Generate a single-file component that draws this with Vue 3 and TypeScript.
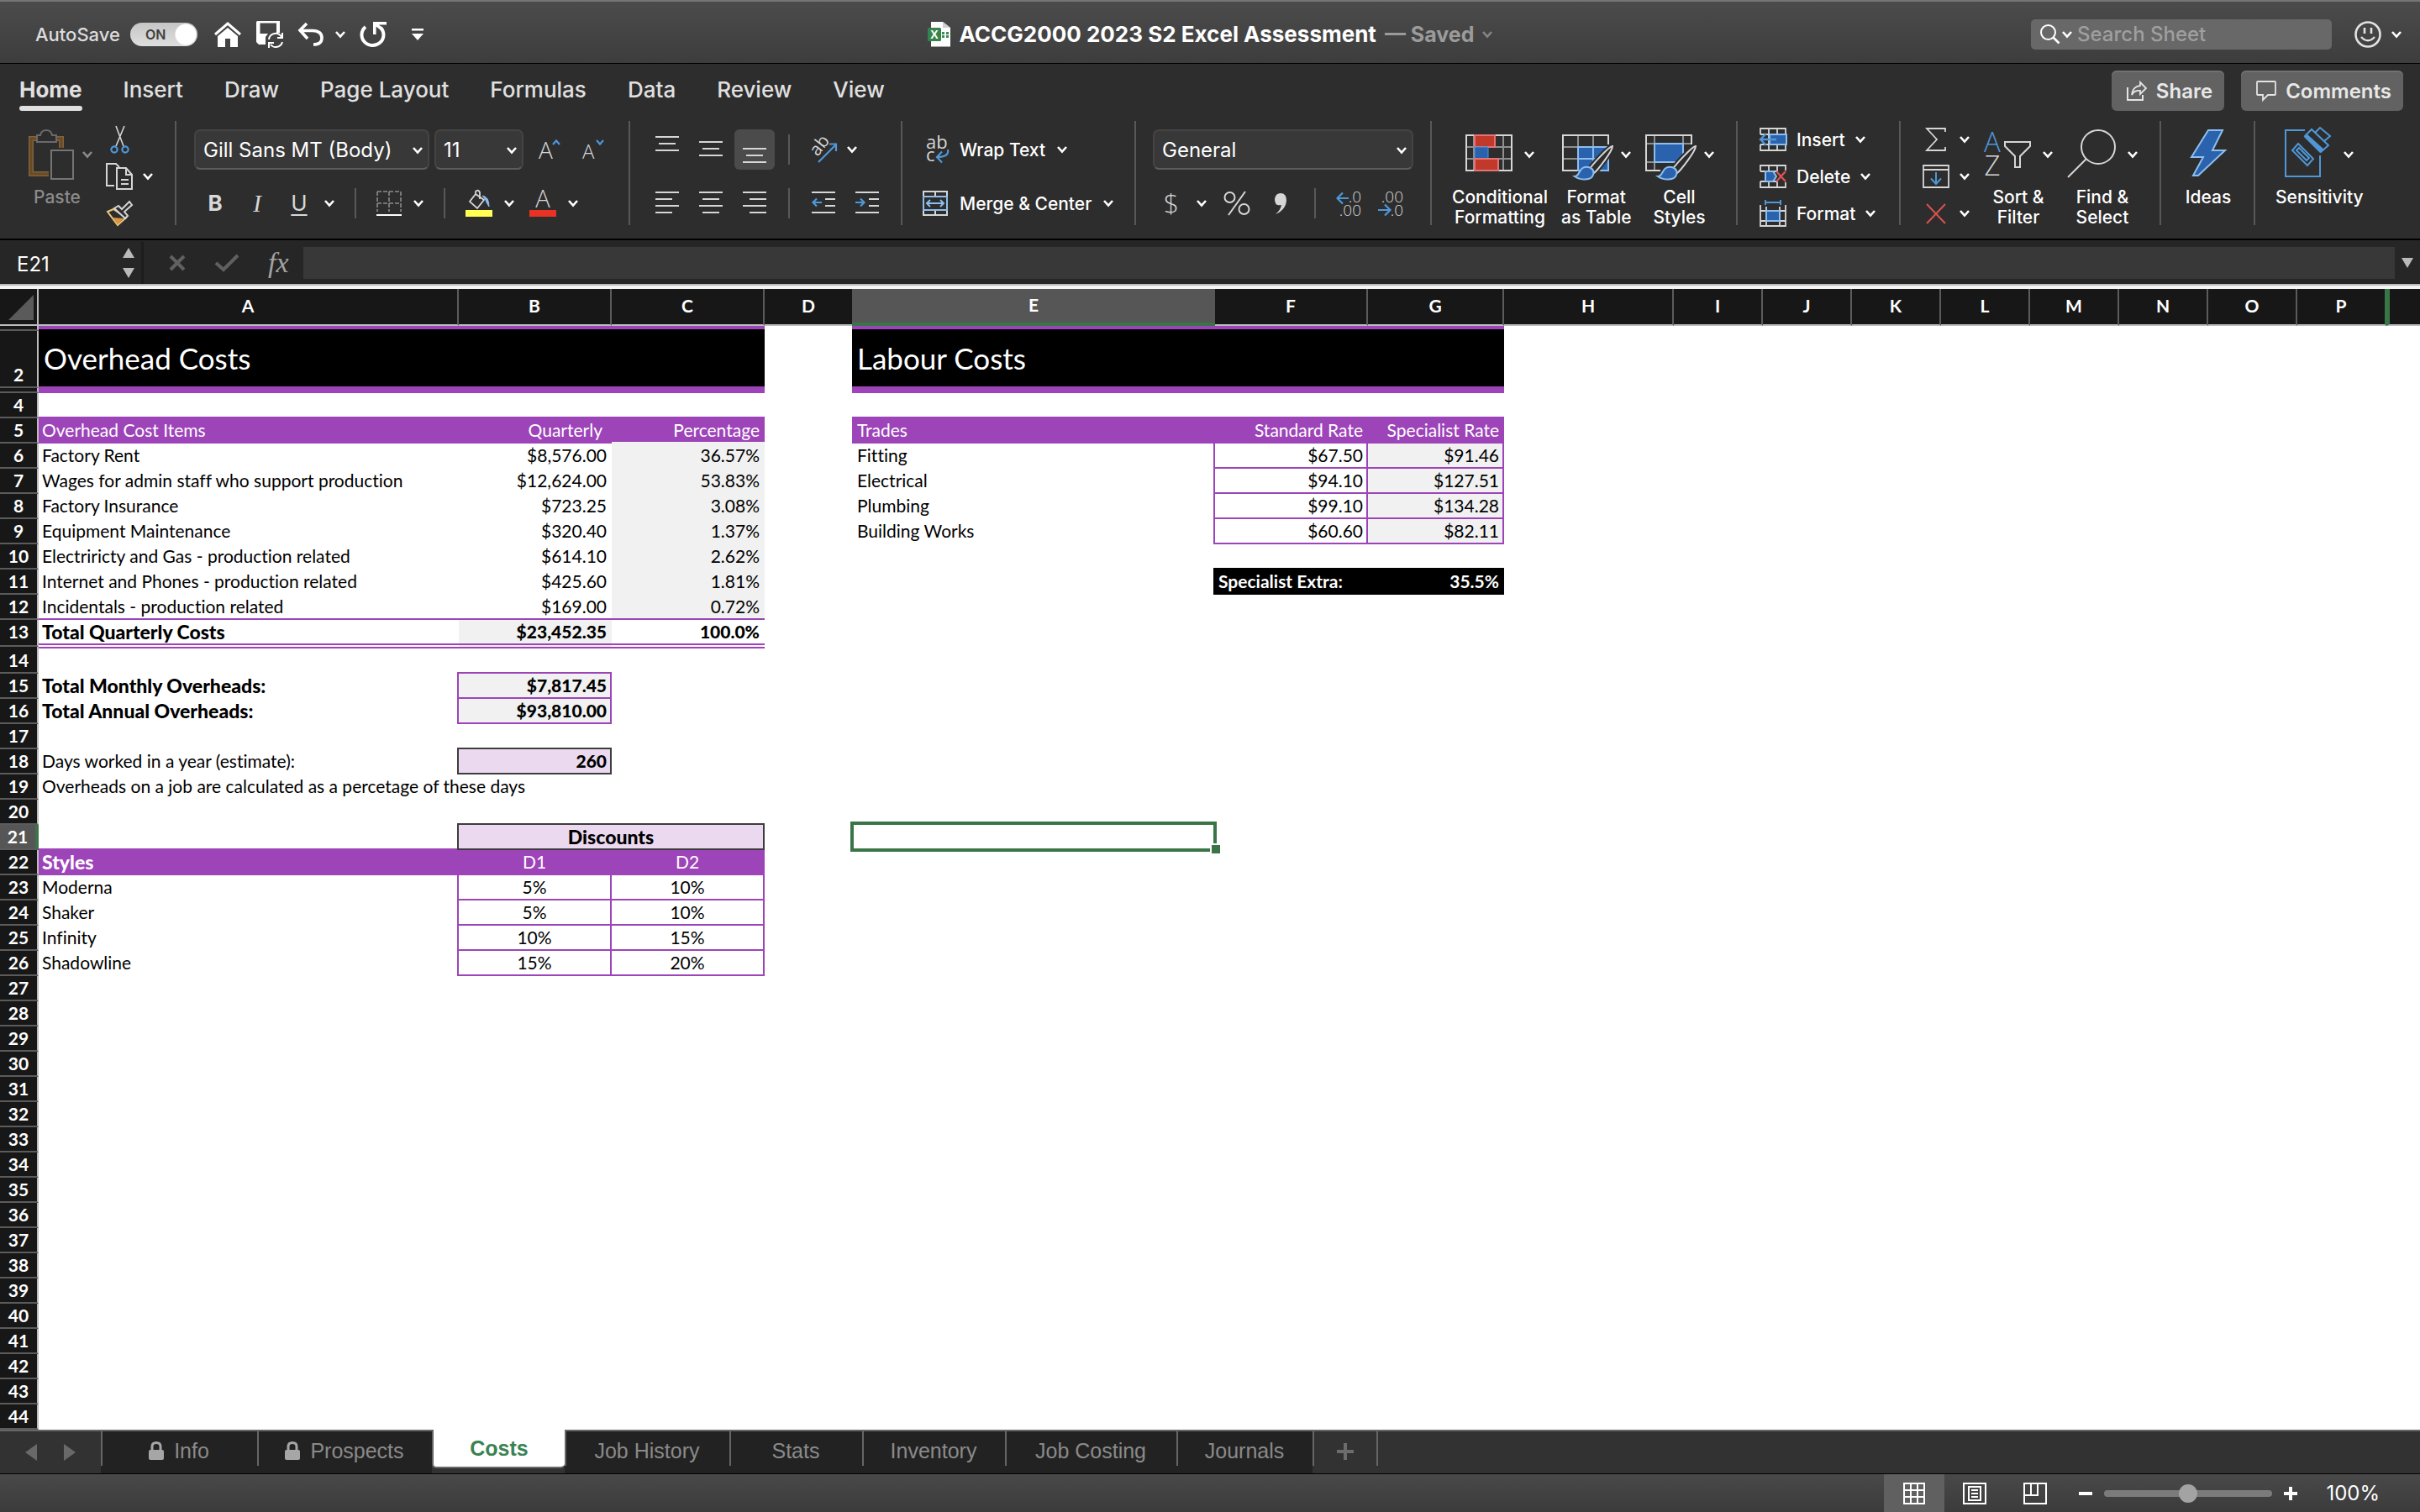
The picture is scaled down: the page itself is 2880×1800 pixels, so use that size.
<script setup lang="ts">
import { h, ref } from 'vue'

interface Cell {
  text?: string
  cls?: string
  span?: number
}
interface Row {
  n: number
  cls?: string
  cells: Record<string, Cell>
}

const columns: string[] = ['A', 'B', 'C', 'D', 'E', 'F', 'G', 'H', 'I', 'J', 'K', 'L', 'M', 'N', 'O', 'P', '']
const ribbonTabs: string[] = ['Home', 'Insert', 'Draw', 'Page Layout', 'Formulas', 'Data', 'Review', 'View']
const autoSave = ref(true)
const zoomLevel = ref(50)

const content: Record<number, Record<string, Cell>> = {
  1: {}, 2: {}, 3: {},
  5: {
    A: { text: 'Overhead Cost Items', cls: 'head' },
    B: { text: 'Quarterly', cls: 'head num inset' },
    C: { text: 'Percentage', cls: 'head num edge-grey' },
    E: { text: 'Trades', cls: 'head indent' },
    F: { text: 'Standard Rate', cls: 'head num' },
    G: { text: 'Specialist Rate', cls: 'head num' },
  },
  15: { A: { text: 'Total Monthly Overheads:', cls: 'bold strong' }, B: { text: '$7,817.45', cls: 'num bold grey box' } },
  16: { A: { text: 'Total Annual Overheads:', cls: 'bold strong' }, B: { text: '$93,810.00', cls: 'num bold grey box' } },
  18: { A: { text: 'Days worked in a year (estimate):' }, B: { text: '260', cls: 'num bold lilac box dark' } },
  19: { A: { text: 'Overheads on a job are calculated as a percetage of these days' } },
  21: { A: { cls: 'edge-purple' }, B: { text: 'Discounts', cls: 'mid bold strong lilac box dark', span: 2 }, E: { cls: 'selected' } },
  22: { A: { text: 'Styles', cls: 'head bold strong' }, B: { text: 'D1', cls: 'head mid' }, C: { text: 'D2', cls: 'head mid' } },
}

for (const c of ['A', 'B', 'C', 'E', 'F', 'G']) {
  content[1][c] = { cls: 'cap' }
  content[2][c] = { cls: 'banner' }
  content[3][c] = { cls: 'head' }
  content[4] = { ...content[4], [c]: { cls: 'edge-purple' } }
}
content[2].A.text = 'Overhead Costs'
content[2].E.text = 'Labour Costs'

const overheads: string[][] = [
  ['Factory Rent', '$8,576.00', '36.57%'],
  ['Wages for admin staff who support production', '$12,624.00', '53.83%'],
  ['Factory Insurance', '$723.25', '3.08%'],
  ['Equipment Maintenance', '$320.40', '1.37%'],
  ['Electriricty and Gas - production related', '$614.10', '2.62%'],
  ['Internet and Phones - production related', '$425.60', '1.81%'],
  ['Incidentals - production related', '$169.00', '0.72%'],
]
overheads.forEach(([name, amount, share], i) => {
  const edge = i === overheads.length - 1 ? ' edge-purple' : ''
  content[6 + i] = {
    A: { text: name, cls: edge },
    B: { text: amount, cls: 'num' + edge },
    C: { text: share, cls: 'num grey' + edge },
  }
})
content[13] = {
  A: { text: 'Total Quarterly Costs', cls: 'bold strong rule-low' },
  B: { text: '$23,452.35', cls: 'num bold grey rule-low' },
  C: { text: '100.0%', cls: 'num bold rule-low' },
}
content[14] = { A: { cls: 'rule-top' }, B: { cls: 'rule-top' }, C: { cls: 'rule-top' } }

const trades: string[][] = [
  ['Fitting', '$67.50', '$91.46'],
  ['Electrical', '$94.10', '$127.51'],
  ['Plumbing', '$99.10', '$134.28'],
  ['Building Works', '$60.60', '$82.11'],
]
trades.forEach(([name, standard, specialist], i) => {
  Object.assign(content[6 + i], {
    E: { text: name, cls: 'indent' },
    F: { text: standard, cls: 'num box' },
    G: { text: specialist, cls: 'num grey box' },
  })
})
Object.assign(content[11], {
  F: { text: 'Specialist Extra:', cls: 'ink' },
  G: { text: '35.5%', cls: 'ink num' },
})

const discounts: string[][] = [
  ['Moderna', '5%', '10%'],
  ['Shaker', '5%', '10%'],
  ['Infinity', '10%', '15%'],
  ['Shadowline', '15%', '20%'],
]
discounts.forEach(([style, d1, d2], i) => {
  content[23 + i] = {
    A: { text: style },
    B: { text: d1, cls: 'mid box' },
    C: { text: d2, cls: 'mid box' },
  }
})

const rowClass: Record<number, string> = { 1: 'thin', 2: 'title', 3: 'thin', 13: 'tall total', 14: 'tall', 21: 'active' }
const rows: Row[] = Array.from({ length: 44 }, (_, i) => ({
  n: i + 1,
  cls: rowClass[i + 1],
  cells: content[i + 1] ?? {},
}))
function columnsOf(row: Row): string[] {
  return row.cells.B?.span ? columns.filter((c) => c !== 'C') : columns
}

const sheets: { name: string; locked?: boolean; active?: boolean; w: number }[] = [
  { name: 'Info', locked: true, w: 186 },
  { name: 'Prospects', locked: true, w: 208 },
  { name: 'Costs', active: true, w: 158 },
  { name: 'Job History', w: 196 },
  { name: 'Stats', w: 158 },
  { name: 'Inventory', w: 170 },
  { name: 'Job Costing', w: 204 },
  { name: 'Journals', w: 162 },
]

const W = '#d6d6d6'
const B = '#4f97d8'
const L = '#8dbfee'
const F = '#2a62ae'
const lines = (rows: number[][]) =>
  rows.map(([x, y, w]) => `<rect x="${x}" y="${y}" width="${w}" height="2" fill="${W}"/>`).join('')
const brush = `<path d="M60 20 C56 20 36 42 33 47 L38 52 C42 49 60 26 60 20Z" fill="#2d2d2d" stroke="#2d2d2d" stroke-width="6"/>
<path d="M60 20 C56 20 36 42 33 47 L38 52 C42 49 60 26 60 20Z" fill="#2d2d2d" stroke="${W}" stroke-width="2"/>
<path d="M15 56 C21 56 20 46 27 45 C34 44 39 48 37 54 C35 61 22 61 15 56Z" fill="${F}" stroke="${L}" stroke-width="2"/>`
const thin = 'font-family="Open Sans, sans-serif" font-weight="300"'

const icons: Record<string, { w: number; h: number; body: string }> = {
  chev: { w: 12, h: 8, body: `<path d="M1 1 L6 6.600 L11 1" fill="none" stroke="currentColor" stroke-width="2.600"/>` },
  home: { w: 32, h: 30, body: `<path d="M1 15 L16 2 L31 15" fill="none" stroke="#fff" stroke-width="3"/><path d="M4 17 L16 7 L28 17 V30 H19 V20 H13 V30 H4Z" fill="#fff"/>` },
  save: { w: 32, h: 32, body: `<path d="M0 1.500 Q0 0 1.500 0 H28 V14 H24 V2.500 H4.500 V15 H14 L11 19 V28 H3 L0 25Z" fill="#fff"/><path d="M15 22 A8 8 0 0 1 30 19 M31 14 V20 H25 M31 25 A8 8 0 0 1 17 28 M15 32 V26 H21" fill="none" stroke="#fff" stroke-width="2"/>` },
  undo: { w: 30, h: 28, body: `<path d="M10 1 L2 9 L11 19 M2 9.500 H17 Q28 10 28 18 Q28 26 18 26" fill="none" stroke="#fff" stroke-width="3.600"/>` },
  redo: { w: 32, h: 30, body: `<path d="M6 6 A13 12.500 0 1 0 24 7" fill="none" stroke="#fff" stroke-width="4"/><path d="M15 1.800 H31 M16.800 0 V15 M17 2 L26 9" fill="none" stroke="#fff" stroke-width="3.600"/>` },
  more: { w: 16, h: 14, body: `<path d="M1 0 H15 V2.500 H1Z M1 6 H15 L8 14Z" fill="#fff"/>` },
  doc: { w: 28, h: 30, body: `<path d="M4 0 H18 L27 7 V29.500 H4Z" fill="#fdfdfd"/><path d="M18 0 V7 H27Z" fill="#cfcfcf"/><path d="M17 12 H20 V15 H17Z M22 12 H25 V15 H22Z M17 16 H20 V19 H17Z M22 16 H25 V19 H22Z" fill="#3b8a52"/><rect y="7" width="16" height="16" rx="1.500" fill="#36834b"/><text x="8" y="20" font-size="14" font-weight="700" fill="#fff" text-anchor="middle" font-family="Liberation Sans, sans-serif">X</text>` },
  search: { w: 24, h: 24, body: `<circle cx="9.500" cy="9.500" r="8.500" fill="none" stroke="#fff" stroke-width="2"/><path d="M15.500 15.500 L22.500 22.500" stroke="#fff" stroke-width="2.600"/>` },
  smile: { w: 32, h: 32, body: `<circle cx="16" cy="16" r="14.500" fill="none" stroke="#e2e2e2" stroke-width="2.600"/><path d="M12 8 V15 M20 8 V15" stroke="#e2e2e2" stroke-width="2.600"/><path d="M8 19 Q16 27.500 24 19" fill="none" stroke="#e2e2e2" stroke-width="2.400"/>` },
  share: { w: 24, h: 24, body: `<path d="M1 8 V23 H19 V17" fill="none" stroke="#e4e4e4" stroke-width="2"/><path d="M16 2 L23 9 L16 16 V12 Q9 11 6 17 Q7 7 16 6Z" fill="none" stroke="#e4e4e4" stroke-width="1.800"/>` },
  comment: { w: 24, h: 24, body: `<path d="M1 2 Q1 1 2 1 H22 Q23 1 23 2 V16 Q23 17 22 17 H14 L8 23 V17 H2 Q1 17 1 16Z" fill="none" stroke="#e4e4e4" stroke-width="1.800"/>` },
  paste: { w: 54, h: 60, body: `<path d="M10 11 H3 V53 H24 M34 11 H39 V22" fill="none" stroke="#7d6341" stroke-width="6"/><path d="M10 11 H3 V53 H24 M34 11 H39 V22" fill="none" stroke="#6b4a22" stroke-width="3"/><path d="M10 15 V7 H14 Q15 1 21 1 Q27 1 28 7 H33 V15Z" fill="#2d2d2d" stroke="#6a6a6a" stroke-width="2"/><rect x="27" y="25" width="26" height="34" fill="#2d2d2d" stroke="#757575" stroke-width="2"/>` },
  cut: { w: 32, h: 32, body: `<path d="M12 0 L21 24 M22 0 L12 24" stroke="${W}" stroke-width="1.600"/><circle cx="10" cy="28" r="3.600" fill="none" stroke="${B}" stroke-width="2.200"/><circle cx="23" cy="28" r="3.600" fill="none" stroke="${B}" stroke-width="2.200"/>` },
  copy: { w: 32, h: 32, body: `<path d="M10 27 H1 V1 H12 L16 5" fill="none" stroke="${W}" stroke-width="2"/><path d="M13 6 H24 L31 14 V31 H13Z M24 6 V14 H31 M18 20 H27 M18 25 H27" fill="none" stroke="${W}" stroke-width="2"/>` },
  painter: { w: 32, h: 30, body: `<path d="M2 13 L9 10 L24 20 L14 29Z" fill="none" stroke="#e8c877" stroke-width="2"/><path d="M8 20 L21 21 L14 28Z" fill="#dd9340"/><path d="M10 9 L15 6 L19 10 L28 1 L31 5 L22 13 L26 18 L23 21Z" fill="#2d2d2d" stroke="${W}" stroke-width="2"/>` },
  grow: { w: 26, h: 24, body: `<text x="0" y="23" font-size="28" fill="${W}" ${thin}>A</text><path d="M17 6 L21 1.500 L25 6" fill="none" stroke="${B}" stroke-width="2.200"/>` },
  shrink: { w: 26, h: 24, body: `<text x="0" y="23" font-size="24" fill="${W}" ${thin}>A</text><path d="M17 1 L21 5.500 L25 1" fill="none" stroke="${B}" stroke-width="2.200"/>` },
  borders: { w: 30, h: 30, body: `<path d="M1 1 H29 V25 M1 1 V25 M1 15 H29 M15 1 V25" fill="none" stroke="#8c8c8c" stroke-width="1.600" stroke-dasharray="5 2"/><path d="M0 29 H30" stroke="#fff" stroke-width="2"/>` },
  fill: { w: 32, h: 32, body: `<path d="M12 5 L5 14 L14 22 L22 12 Z M12 5 V2 Q15 -1 17 3 V11" fill="none" stroke="${W}" stroke-width="1.800"/><path d="M20 7 Q28 8 28 20 Q24 14 24 12Z" fill="${L}" stroke="${L}"/><rect y="24" width="32" height="8" fill="#ffff54"/>` },
  color: { w: 32, h: 32, body: `<text x="16" y="21" font-size="29" fill="${W}" text-anchor="middle" ${thin}>A</text><rect y="24" width="32" height="8" fill="#e93223"/>` },
  vtop: { w: 28, h: 32, body: lines([[0, 0, 28], [4, 8, 20], [0, 16, 28]]) },
  vmid: { w: 28, h: 32, body: lines([[0, 6, 28], [4, 14, 20], [0, 22, 28]]) },
  vbot: { w: 28, h: 32, body: lines([[0, 14, 28], [4, 22, 20], [0, 30, 28]]) },
  left: { w: 28, h: 28, body: lines([[0, 0, 28], [0, 8, 20], [0, 16, 28], [0, 24, 20]]) },
  center: { w: 28, h: 28, body: lines([[0, 0, 28], [4, 8, 20], [0, 16, 28], [4, 24, 20]]) },
  right: { w: 28, h: 28, body: lines([[0, 0, 28], [8, 8, 20], [0, 16, 28], [8, 24, 20]]) },
  outdent: { w: 28, h: 28, body: lines([[0, 0, 28], [16, 8, 12], [16, 16, 12], [0, 24, 28]]) + `<path d="M12 13 H1.500 M6 8.500 L1.500 13 L6 17.500" fill="none" stroke="${B}" stroke-width="2.200"/>` },
  indent: { w: 28, h: 28, body: lines([[0, 0, 28], [16, 8, 12], [16, 16, 12], [0, 24, 28]]) + `<path d="M0 13 H11 M6 8.500 L10.500 13 L6 17.500" fill="none" stroke="${B}" stroke-width="2.200"/>` },
  orient: { w: 32, h: 32, body: `<text font-size="21" fill="${W}" transform="translate(9 25) rotate(-52)" font-family="Open Sans, sans-serif">ab</text><path d="M10 31 L31 10 M23 9.500 H31 V18" fill="none" stroke="${B}" stroke-width="2.200"/>` },
  wrap: { w: 30, h: 32, body: `<text font-size="22" fill="${W}" font-family="Open Sans, sans-serif"><tspan x="4" y="15">ab</tspan><tspan x="4" y="30">c</tspan></text><path d="M30 16 Q32 25 17 25 M23 18.500 L17 25 L23 31.500" fill="none" stroke="${B}" stroke-width="2.200"/>` },
  merge: { w: 30, h: 30, body: `<path d="M1 7 V1 H29 V7 M1 23 V29 H29 V23 M15 1 V7 M15 23 V29" fill="none" stroke="${W}" stroke-width="2"/><rect x="1" y="7" width="28" height="16" fill="none" stroke="${L}" stroke-width="2"/><path d="M5 15 H25 M9 11 L5 15 L9 19 M21 11 L25 15 L21 19" fill="none" stroke="${L}" stroke-width="2"/>` },
  dollar: { w: 32, h: 32, body: `<text x="16" y="27" font-size="32" fill="${W}" text-anchor="middle" ${thin}>$</text>` },
  percent: { w: 32, h: 32, body: `<circle cx="7.500" cy="9" r="6" fill="none" stroke="${W}" stroke-width="2"/><circle cx="24.500" cy="23" r="6" fill="none" stroke="${W}" stroke-width="2"/><path d="M26 2 L6 30" stroke="${W}" stroke-width="2"/>` },
  comma: { w: 32, h: 32, body: `<path d="M16 4 Q23 4 23 13 Q22 24 10 29 Q16 24 17 18 Q9 20 9 11 Q10 4 16 4Z" fill="${W}"/>` },
  moredec: { w: 30, h: 30, body: `<text font-size="19" fill="${W}" text-anchor="end" ${thin}><tspan x="30" y="14">.0</tspan><tspan x="30" y="30">.00</tspan></text><path d="M15 9 H2 M8 2.500 L1.500 9 L8 15.500" fill="none" stroke="${B}" stroke-width="2.200"/>` },
  lessdec: { w: 30, h: 30, body: `<text font-size="19" fill="${W}" text-anchor="end" ${thin}><tspan x="30" y="14">.00</tspan><tspan x="30" y="30">.0</tspan></text><path d="M0 23 H14 M8 16.500 L14.500 23 L8 29.500" fill="none" stroke="${B}" stroke-width="2.200"/>` },
  condfmt: { w: 56, h: 60, body: `<path d="M1 21 H55 M1 35 H55 M10 7 V49 M45 7 V49" stroke="#8f8f8f" stroke-width="2"/><rect x="1" y="7" width="54" height="42" fill="none" stroke="${W}" stroke-width="2"/><rect x="11" y="7" width="24" height="14" fill="#c0392b" stroke="#e57373" stroke-width="2"/><rect x="11" y="21" width="16" height="14" fill="${F}" stroke="${B}"/><rect x="11" y="35" width="28" height="14" fill="#c0392b" stroke="#e57373" stroke-width="2"/>` },
  fmttable: { w: 56, h: 60, body: `<path d="M1 21 H55 M1 35 H55 M19 7 V49 M37 7 V49" stroke="#8f8f8f" stroke-width="2"/><path d="M55 18 V7 H1 V49 H20" fill="none" stroke="${W}" stroke-width="2"/><rect x="19" y="21" width="36" height="28" fill="${F}" stroke="${L}" stroke-width="2"/><path d="M19 35 H55 M37 21 V49" stroke="${L}" stroke-width="2"/>${brush}` },
  cellstyle: { w: 56, h: 60, body: `<path d="M1 17 H55 M1 39 H20 M11 7 V49 M45 7 V17" stroke="#8f8f8f" stroke-width="2"/><path d="M55 18 V7 H1 V49 H18" fill="none" stroke="${W}" stroke-width="2"/><rect x="11" y="17" width="34" height="22" fill="${F}" stroke="${L}" stroke-width="2"/>${brush}` },
  insert: { w: 32, h: 28, body: `<path d="M1 8 V1 H31 V27 H1 V20 M11 1 V27 M21 1 V27 M1 8 H31 M1 20 H31" fill="none" stroke="${W}" stroke-width="1.800"/><rect x="12" y="8" width="20" height="12" fill="${F}" stroke="${L}" stroke-width="2"/><path d="M20 14 H1 M8 7 L1 14 L8 21" fill="none" stroke="${B}" stroke-width="2.400"/>` },
  delete: { w: 32, h: 28, body: `<path d="M1 8 V1 H31 V7 M1 20 V27 H31 V21 M11 1 V8 M21 1 V8 M11 20 V27 M21 20 V27 M1 8 H20 M1 20 H20" fill="none" stroke="${W}" stroke-width="1.800"/><path d="M7 8 H16 L20 14 L16 20 H7Z" fill="${F}" stroke="${L}" stroke-width="2"/><path d="M20 8 L31 20 M31 8 L20 20" stroke="#d9534f" stroke-width="2.400"/>` },
  format: { w: 32, h: 32, body: `<path d="M1 6 V31 H31 V6 M1 13 H31 M1 25 H31 M8 8 V31 M24 8 V31" fill="none" stroke="${W}" stroke-width="1.800"/><rect x="8" y="13" width="16" height="12" fill="${F}" stroke="${L}" stroke-width="2"/><path d="M7 3 H25 M7 0 V6 M25 0 V6" stroke="${B}" stroke-width="2"/>` },
  sum: { w: 32, h: 28, body: `<path d="M27 5 V1 H5 L17 14 L5 27 H27 V23" fill="none" stroke="${W}" stroke-width="1.800"/>` },
  filldown: { w: 32, h: 28, body: `<path d="M1 1 H31 V27 H1Z M1 6 H31" fill="none" stroke="${W}" stroke-width="1.800"/><path d="M16 9 V22 M10 16.500 L16 23 L22 16.500" fill="none" stroke="${B}" stroke-width="2"/>` },
  clear: { w: 32, h: 28, body: `<path d="M5 3 L27 26 M27 3 L5 26" stroke="#d9534f" stroke-width="2"/>` },
  sort: { w: 56, h: 60, body: `<text font-size="33" text-anchor="middle" ${thin}><tspan x="10" y="27" fill="${B}">A</tspan><tspan x="10" y="55" fill="${W}">Z</tspan></text><path d="M25 15 H55 V20 L43 32 V45 H37 V32 L25 20Z" fill="none" stroke="${W}" stroke-width="2"/>` },
  find: { w: 58, h: 60, body: `<circle cx="37" cy="21" r="20" fill="none" stroke="${W}" stroke-width="2"/><path d="M23 35 L1 57" stroke="${W}" stroke-width="2"/>` },
  ideas: { w: 44, h: 60, body: `<path d="M22 1 H39 L27 25 H42 L10 55 H4 L16 33 H2Z" fill="${F}" stroke="${L}" stroke-width="2"/>` },
  sens: { w: 56, h: 60, body: `<path d="M24 1 H1 V56 H42 V31" fill="none" stroke="${B}" stroke-width="2"/><path d="M9 25 L16 17 L34 35 L27 43Z M14 25 L17 22 L29 34 L26 37Z" fill="none" stroke="${B}" stroke-width="2"/><path d="M24 8 L32 0 L52 19 L43 27Z" fill="none" stroke="${B}" stroke-width="2"/><path d="M23 9 L27 6 L47 24 L42 28Z" fill="${B}"/><path d="M36 4 L42 -2 L54 8 L47 14" fill="none" stroke="${B}" stroke-width="2"/>` },
  cancel: { w: 20, h: 20, body: `<path d="M2 2 L18 18 M18 2 L2 18" stroke="#606060" stroke-width="4"/>` },
  accept: { w: 30, h: 22, body: `<path d="M2 11 L11 19 L28 2" fill="none" stroke="#606060" stroke-width="4"/>` },
  lock: { w: 18, h: 22, body: `<path d="M4 11 V6 Q4 1.500 9 1.500 Q14 1.500 14 6 V11" fill="none" stroke="#a6a6a6" stroke-width="3"/><rect y="10" width="18" height="12" rx="2" fill="#a6a6a6"/>` },
  normal: { w: 26, h: 26, body: `<path d="M1 1 H25 V25 H1Z M9 1 V25 M17 1 V25 M1 9 H25 M1 17 H25" fill="none" stroke="#fff" stroke-width="2"/>` },
  layout: { w: 28, h: 26, body: `<path d="M1 1 H27 V25 H1Z M7 5 H21 V21 H7Z M10 9 H18 M10 13 H18 M10 17 H18" fill="none" stroke="#fff" stroke-width="2"/>` },
  breaks: { w: 28, h: 26, body: `<path d="M1 1 H27 V25 H1Z M9 1 V15 M1 15 H17 V1" fill="none" stroke="#fff" stroke-width="2"/>` },
  minus: { w: 16, h: 16, body: `<path d="M0 8 H16" stroke="#fff" stroke-width="4"/>` },
  plus: { w: 16, h: 16, body: `<path d="M0 8 H16 M8 0 V16" stroke="#fff" stroke-width="4"/>` },
}

const Icon = (props: { name: string }) => {
  const i = icons[props.name]
  return h('svg', { class: 'ico', width: i.w, height: i.h, viewBox: `0 0 ${i.w} ${i.h}`, 'aria-hidden': 'true', innerHTML: i.body })
}
Icon.props = ['name']
</script>

<template>
  <div class="app">
    <header class="titlebar">
      <div class="quick">
        <label class="autosave">
          AutoSave
          <span class="switch"><input v-model="autoSave" type="checkbox" /><span class="state">ON</span></span>
        </label>
        <div class="quick-icons">
          <button aria-label="Home"><Icon name="home" /></button>
          <button aria-label="Save"><Icon name="save" /></button>
          <button class="split" aria-label="Undo"><Icon name="undo" /><Icon name="chev" /></button>
          <button aria-label="Redo"><Icon name="redo" /></button>
          <button class="more" aria-label="Customize toolbar"><Icon name="more" /></button>
        </div>
      </div>
      <div class="doc">
        <Icon name="doc" />
        <h1>ACCG2000 2023 S2 Excel Assessment</h1>
        <span class="saved">— Saved</span>
        <span class="saved-chev"><Icon name="chev" /></span>
      </div>
      <div class="title-right">
        <label class="search">
          <Icon name="search" /><Icon name="chev" />
          <input type="text" placeholder="Search Sheet" aria-label="Search Sheet" />
        </label>
        <button class="split feedback" aria-label="Feedback"><Icon name="smile" /><Icon name="chev" /></button>
      </div>
    </header>

    <nav class="menubar">
      <a v-for="(t, i) in ribbonTabs" :key="t" href="#" :class="{ current: i === 0 }">{{ t }}</a>
      <div class="actions">
        <button><Icon name="share" />Share</button>
        <button><Icon name="comment" />Comments</button>
      </div>
    </nav>

    <section class="ribbon">
      <div class="group clipboard">
        <button class="big paste">
          <span class="pic"><Icon name="paste" /><Icon name="chev" /></span>
          <span class="label">Paste</span>
        </button>
        <div class="stack">
          <button aria-label="Cut"><Icon name="cut" /></button>
          <button aria-label="Copy"><Icon name="copy" /><Icon name="chev" /></button>
          <button aria-label="Format Painter"><Icon name="painter" /></button>
        </div>
      </div>

      <div class="group font">
        <div class="line tight">
          <span class="picker face">
            <select aria-label="Font"><option>Gill Sans MT (Body)</option></select><Icon name="chev" />
          </span>
          <span class="picker size">
            <select aria-label="Font size"><option>11</option></select><Icon name="chev" />
          </span>
          <span class="sizers">
            <button aria-label="Increase font size"><Icon name="grow" /></button>
            <button aria-label="Decrease font size"><Icon name="shrink" /></button>
          </span>
        </div>
        <div class="line marks">
          <button class="glyph b">B</button>
          <button class="glyph i">I</button>
          <button class="split"><span class="glyph u">U</span><Icon name="chev" /></button>
          <span class="bar"></span>
          <button class="split" aria-label="Borders"><Icon name="borders" /><Icon name="chev" /></button>
          <span class="bar"></span>
          <button class="split" aria-label="Fill color"><Icon name="fill" /><Icon name="chev" /></button>
          <button class="split" aria-label="Font color"><Icon name="color" /><Icon name="chev" /></button>
        </div>
      </div>

      <div class="group align">
        <div class="line">
          <button aria-label="Top align"><Icon name="vtop" /></button>
          <button aria-label="Middle align"><Icon name="vmid" /></button>
          <button class="pressed" aria-label="Bottom align"><Icon name="vbot" /></button>
          <span class="bar"></span>
          <button aria-label="Orientation"><Icon name="orient" /></button>
          <Icon name="chev" />
        </div>
        <div class="line">
          <button aria-label="Align left"><Icon name="left" /></button>
          <button aria-label="Center"><Icon name="center" /></button>
          <button aria-label="Align right"><Icon name="right" /></button>
          <span class="bar"></span>
          <button aria-label="Decrease indent"><Icon name="outdent" /></button>
          <button aria-label="Increase indent"><Icon name="indent" /></button>
        </div>
      </div>

      <div class="group merge">
        <button class="line texted"><Icon name="wrap" />Wrap Text<Icon name="chev" /></button>
        <button class="line texted"><Icon name="merge" />Merge &amp; Center<Icon name="chev" /></button>
      </div>

      <div class="group number">
        <div class="line">
          <span class="picker kind">
            <select aria-label="Number format"><option>General</option></select><Icon name="chev" />
          </span>
        </div>
        <div class="line figures">
          <button class="split" aria-label="Currency"><Icon name="dollar" /><Icon name="chev" /></button>
          <button aria-label="Percent"><Icon name="percent" /></button>
          <button aria-label="Comma"><Icon name="comma" /></button>
          <span class="bar"></span>
          <button aria-label="Increase decimal"><Icon name="moredec" /></button>
          <button aria-label="Decrease decimal"><Icon name="lessdec" /></button>
        </div>
      </div>

      <div class="group styles">
        <button class="big wide">
          <span class="pic"><Icon name="condfmt" /><Icon name="chev" /></span>
          <span class="label">Conditional<br />Formatting</span>
        </button>
        <button class="big">
          <span class="pic"><Icon name="fmttable" /><Icon name="chev" /></span>
          <span class="label">Format<br />as Table</span>
        </button>
        <button class="big">
          <span class="pic"><Icon name="cellstyle" /><Icon name="chev" /></span>
          <span class="label">Cell<br />Styles</span>
        </button>
      </div>

      <div class="group cells">
        <div class="stack">
          <button><Icon name="insert" />Insert<Icon name="chev" /></button>
          <button><Icon name="delete" />Delete<Icon name="chev" /></button>
          <button><Icon name="format" />Format<Icon name="chev" /></button>
        </div>
      </div>

      <div class="group editing">
        <div class="stack">
          <button aria-label="AutoSum"><Icon name="sum" /><Icon name="chev" /></button>
          <button aria-label="Fill"><Icon name="filldown" /><Icon name="chev" /></button>
          <button aria-label="Clear"><Icon name="clear" /><Icon name="chev" /></button>
        </div>
        <button class="big">
          <span class="pic"><Icon name="sort" /><Icon name="chev" /></span>
          <span class="label">Sort &amp;<br />Filter</span>
        </button>
        <button class="big">
          <span class="pic"><Icon name="find" /><Icon name="chev" /></span>
          <span class="label">Find &amp;<br />Select</span>
        </button>
      </div>

      <div class="group ideas">
        <button class="big">
          <span class="pic"><Icon name="ideas" /></span>
          <span class="label">Ideas</span>
        </button>
      </div>

      <div class="group sensitivity">
        <button class="big">
          <span class="pic"><Icon name="sens" /><Icon name="chev" /></span>
          <span class="label">Sensitivity</span>
        </button>
      </div>
    </section>

    <section class="formula">
      <div class="namebox">
        <input type="text" value="E21" aria-label="Name box" />
        <span class="spin"><i class="up"></i><i class="down"></i></span>
      </div>
      <div class="fx-tools">
        <button aria-label="Cancel"><Icon name="cancel" /></button>
        <button aria-label="Enter"><Icon name="accept" /></button>
        <button class="fx">fx</button>
      </div>
      <input class="entry" type="text" aria-label="Formula bar" />
      <button class="expand" aria-label="Expand formula bar"><i class="down"></i></button>
    </section>

    <main class="sheet">
      <table>
        <colgroup>
          <col class="c-head" />
          <col v-for="c in columns" :key="c" :class="'c-' + (c || 'rest')" />
        </colgroup>
        <thead>
          <tr>
            <th class="corner"><i></i></th>
            <th v-for="c in columns" :key="c" scope="col" :class="'h-' + (c || 'rest')">{{ c }}</th>
          </tr>
        </thead>
        <tbody>
          <tr v-for="r in rows" :key="r.n" :class="r.cls">
            <th scope="row">{{ r.cls === 'thin' ? '' : r.n }}</th>
            <td v-for="c in columnsOf(r)" :key="c" :class="r.cells[c]?.cls" :colspan="r.cells[c]?.span">{{ r.cells[c]?.text }}</td>
          </tr>
        </tbody>
      </table>
    </main>

    <nav class="tabs">
      <div class="arrows">
        <button aria-label="Previous sheet"><i class="prev"></i></button>
        <button aria-label="Next sheet"><i class="next"></i></button>
      </div>
      <button v-for="s in sheets" :key="s.name" class="tab" :class="{ front: s.active }" :style="{ width: s.w + 'px' }">
        <Icon v-if="s.locked" name="lock" />{{ s.name }}
      </button>
      <button class="add" aria-label="New sheet"><i></i></button>
    </nav>

    <footer class="status">
      <button class="view on" aria-label="Normal view"><Icon name="normal" /></button>
      <button class="view" aria-label="Page layout view"><Icon name="layout" /></button>
      <button class="view" aria-label="Page break preview"><Icon name="breaks" /></button>
      <div class="zoom">
        <button aria-label="Zoom out"><Icon name="minus" /></button>
        <input v-model="zoomLevel" type="range" min="0" max="100" aria-label="Zoom" />
        <button aria-label="Zoom in"><Icon name="plus" /></button>
      </div>
      <output class="percent">100%</output>
    </footer>
  </div>
</template>

<style>
body {
  margin: 0;
  background: #2d2d2d;
}
</style>

<style scoped>
.app {
  --purple: #9d44b9;
  --green: #3a7548;
  --ui: Inter, "Liberation Sans", sans-serif;
  --cell: Lato, "Noto Sans", sans-serif;
  display: flex;
  flex-direction: column;
  min-height: 100vh;
  overflow: hidden;
  font-family: var(--ui);
  color: #fff;
}
button,
input,
select {
  margin: 0;
  padding: 0;
  border: 0;
  background: none;
  color: inherit;
  font: inherit;
  outline: none;
}
button {
  display: flex;
  align-items: center;
  justify-content: center;
  white-space: nowrap;
}
.ico {
  display: block;
  flex: none;
  overflow: visible;
}
.split {
  gap: 14px;
}

/* title bar */
.titlebar {
  box-sizing: border-box;
  display: grid;
  grid-template-columns: 1fr auto 1fr;
  align-items: center;
  height: 76px;
  padding: 4px 22px 0 42px;
  background: linear-gradient(#4b4b4b, #3d3d3d);
  border-top: 2px solid #757575;
  border-bottom: 1px solid #000;
}
.quick,
.autosave,
.quick-icons,
.doc,
.title-right {
  display: flex;
  align-items: center;
}
.quick {
  gap: 20px;
}
.autosave {
  gap: 12px;
  font-size: 22px;
  font-weight: 500;
  color: #dcdcdc;
}
.switch {
  display: grid;
  align-items: center;
}
.switch > * {
  grid-area: 1 / 1;
}
.switch input {
  appearance: none;
  width: 80px;
  height: 28px;
  border-radius: 14px;
  background: radial-gradient(circle at 66px 14px, #fff 12px, transparent 13px), linear-gradient(#c6c6c6, #dedede);
}
.state {
  padding-left: 18px;
  font-size: 16px;
  font-weight: 600;
  color: #404040;
}
.quick-icons {
  gap: 18px;
}
.more {
  padding-left: 10px;
}
.doc {
  gap: 10px;
  padding-right: 20px;
}
.doc h1 {
  margin: 0;
  font-size: 26px;
  line-height: 32px;
  font-weight: 700;
}
.saved {
  font-size: 25px;
  line-height: 32px;
  font-weight: 700;
  color: #9b9b9b;
}
.saved-chev {
  color: #858585;
}
.title-right {
  justify-content: flex-end;
  gap: 27px;
}
.search {
  box-sizing: border-box;
  display: flex;
  align-items: center;
  gap: 2px;
  width: 358px;
  height: 36px;
  padding-left: 11px;
  border-radius: 5px;
  background: #686868;
}
.search input {
  flex: 1;
  min-width: 0;
  margin-left: 4px;
  font-size: 24px;
  font-weight: 500;
}
.search input::placeholder {
  color: #9f9f9f;
  opacity: 1;
}
.feedback {
  gap: 12px;
}

/* menu tabs */
.menubar {
  box-sizing: border-box;
  display: flex;
  align-items: center;
  gap: 49px;
  height: 68px;
  padding: 0 20px 4px 23px;
  background: #2d2d2d;
}
.menubar a {
  position: relative;
  padding: 7px 0 9px;
  color: #e0e0e0;
  font-size: 26px;
  font-weight: 500;
  line-height: 32px;
  text-decoration: none;
}
.menubar a.current {
  font-weight: 700;
}
.menubar a.current::after {
  content: "";
  position: absolute;
  left: 0;
  right: 0;
  bottom: 0;
  height: 6px;
  border-radius: 3px;
  background: #e0e0e0;
}
.actions {
  display: flex;
  gap: 20px;
  margin-left: auto;
}
.actions button {
  gap: 11px;
  height: 48px;
  padding: 0 14px 0 18px;
  border-radius: 6px;
  background: #626262;
  box-shadow: inset 0 2px #717171;
  color: #e8e8e8;
  font-size: 24px;
  font-weight: 600;
}

/* ribbon */
.ribbon {
  display: flex;
  height: 140px;
  background: #2d2d2d;
  border-bottom: 2px solid #000;
  font-size: 21px;
  font-weight: 500;
}
.group {
  box-sizing: border-box;
  flex: none;
  padding-top: 10px;
  background: linear-gradient(#585858, #585858) no-repeat right top / 2px 124px;
}
.line {
  display: flex;
  align-items: center;
  height: 48px;
  margin-bottom: 16px;
}
.bar {
  width: 2px;
  height: 36px;
  background: #585858;
}
.stack {
  display: flex;
  flex-direction: column;
  margin-top: -10px;
}
.stack button {
  height: 44px;
  gap: 12px;
  justify-content: flex-start;
}
.big {
  flex-direction: column;
  justify-content: flex-start;
  gap: 9px;
  min-width: 82px;
}
.pic {
  display: flex;
  align-items: center;
  gap: 14px;
  height: 60px;
}
.label {
  line-height: 24px;
  text-align: center;
}
.clipboard {
  display: flex;
  gap: 16px;
  width: 210px;
  padding-left: 34px;
}
.paste {
  min-width: 76px;
  color: #8b8b8b;
}
.paste .pic {
  gap: 10px;
}
.paste .label {
  padding-right: 8px;
}
.font {
  width: 540px;
  padding-left: 21px;
}
.tight {
  gap: 6px;
}
.picker {
  position: relative;
  display: block;
}
.picker select {
  box-sizing: border-box;
  appearance: none;
  display: block;
  width: 100%;
  height: 48px;
  padding-left: 9px;
  border: 2px solid #444;
  border-bottom-color: #5c5c5c;
  border-radius: 7px;
  background: #383838;
  font-size: 24px;
  font-weight: 400;
}
.picker .ico {
  position: absolute;
  right: 8px;
  top: 21px;
}
.face {
  width: 280px;
}
.size {
  width: 106px;
}
.kind {
  width: 310px;
}
.sizers {
  display: flex;
  gap: 26px;
  padding-left: 12px;
}
.marks {
  gap: 18px;
  padding-left: 9px;
}
.marks .bar {
  margin: 0 6px;
}
.glyph {
  width: 32px;
  font-size: 26px;
  line-height: 32px;
  color: #d8d8d8;
  text-align: center;
}
.b {
  font-weight: 700;
}
.i {
  font-family: "Liberation Serif", serif;
  font-style: italic;
  font-size: 29px;
}
.u {
  font-weight: 400;
  text-decoration: underline;
  text-underline-offset: 4px;
  text-decoration-thickness: 2px;
}
.align {
  width: 324px;
  padding-left: 20px;
}
.align .line {
  gap: 4px;
}
.align .bar {
  margin: 0 12px;
}
.align button {
  width: 48px;
  height: 48px;
  border-radius: 6px;
}
.pressed {
  background: #4b4b4b;
}
.merge {
  width: 278px;
  padding-left: 24px;
}
.texted {
  gap: 14px;
}
.number {
  width: 352px;
  padding-left: 20px;
}
.figures {
  gap: 20px;
  padding-left: 6px;
}
.figures .bar {
  margin: 0 4px;
}
.styles {
  display: flex;
  gap: 16px;
  width: 364px;
  padding-left: 24px;
}
.wide {
  min-width: 112px;
}
.cells {
  width: 194px;
  padding-left: 26px;
}
.editing {
  display: flex;
  gap: 17px;
  width: 310px;
  padding-left: 26px;
}
.ideas {
  display: flex;
  justify-content: center;
  width: 112px;
}
.sensitivity {
  padding-left: 24px;
  background: none;
}

/* formula bar */
.formula {
  box-sizing: border-box;
  display: flex;
  align-items: center;
  height: 54px;
  padding-top: 2px;
  background: #262626;
  border-bottom: 2px solid #b9b9b9;
  box-shadow: 0 4px #f4f4f4;
  margin-bottom: 4px;
}
.namebox {
  box-sizing: border-box;
  display: flex;
  align-items: center;
  justify-content: space-between;
  width: 171px;
  height: 50px;
  padding: 0 8px 0 20px;
  border-right: 3px solid #1d1d1d;
}
.namebox input {
  width: 100px;
  padding-top: 2px;
  font-size: 24px;
}
.spin {
  display: flex;
  flex-direction: column;
  gap: 12px;
}
.up,
.down {
  display: block;
  width: 14px;
  height: 12px;
  background: #bababa;
}
.up {
  clip-path: polygon(50% 0, 100% 100%, 0 100%);
}
.down {
  clip-path: polygon(0 0, 100% 0, 50% 100%);
}
.fx-tools {
  display: flex;
  align-items: center;
  gap: 34px;
  width: 190px;
  box-sizing: border-box;
  padding-left: 30px;
}
.fx {
  color: #a2a2a2;
  font-family: "Liberation Serif", serif;
  font-style: italic;
  font-size: 34px;
  line-height: 36px;
}
.entry {
  flex: 1;
  height: 38px;
  background: #383838;
}
.expand {
  width: 30px;
}

/* worksheet */
.sheet {
  flex: 1;
  background: #fff;
  color: #000;
}
table {
  width: 100%;
  table-layout: fixed;
  border-collapse: separate;
  border-spacing: 0;
  font-family: var(--cell);
  font-size: 21px;
  line-height: 24px;
  font-variant-ligatures: none;
}
.c-head { width: 46px; }
.c-A { width: 500px; }
.c-B, .c-C, .c-F { width: 182px; }
.c-D { width: 104px; }
.c-E { width: 432px; }
.c-G { width: 162px; }
.c-H { width: 202px; }
.c-I, .c-J, .c-K, .c-L, .c-M, .c-N, .c-O, .c-P { width: 106px; }
.c-rest { width: auto; }
th,
td {
  box-sizing: border-box;
  height: 30px;
  border: 0 solid transparent;
  border-bottom-width: 2px;
  text-align: left;
  vertical-align: bottom;
  white-space: nowrap;
}
td {
  padding: 0 6px 2px 4px;
}
th {
  padding: 0 0 2px;
  border-right-width: 2px;
  background: #171717;
  color: #fff;
  font-weight: 700;
  text-align: center;
}
thead th {
  height: 44px;
  vertical-align: middle;
  border-color: #5b5b5b;
  border-bottom-color: #bdbdbd;
}
thead th.corner {
  border-right-color: #bdbdbd;
}
.corner i {
  display: block;
  width: 30px;
  height: 30px;
  margin: 4px 4px 0 auto;
  background: #5a5a5a;
  clip-path: polygon(100% 0, 100% 100%, 0 100%);
}
thead th.h-D {
  border-right-width: 0;
}
thead th.h-E {
  background: #565656;
  border-right-width: 0;
  border-bottom: 4px solid var(--green);
}
thead th.h-P {
  border-right-color: var(--green);
}
thead th.h-rest {
  border-left: 4px solid var(--green);
  border-right-width: 0;
}
tbody th {
  border-color: #5b5b5b;
  border-right-color: #bdbdbd;
}
.active th {
  background: #565656;
  border-right: 4px solid var(--green);
}
.thin th,
.thin td {
  height: 6px;
  padding: 0;
  font-size: 0;
  line-height: 0;
}
.title th,
.title td {
  height: 68px;
}
.tall th,
.tall td {
  height: 32px;
}
.total th,
.total td {
  padding-bottom: 4px;
}
.cap {
  background: #000;
  border-top: 4px solid var(--purple);
  border-bottom-width: 0;
}
.banner {
  background: #000;
  border-bottom-color: var(--purple);
  color: #fff;
  font-size: 35px;
  line-height: 40px;
  vertical-align: middle;
  padding-left: 6px;
}
.head {
  background: var(--purple);
  color: #fff;
}
.num {
  text-align: right;
}
.mid {
  text-align: center;
}
.inset {
  padding-right: 11px;
}
.indent {
  padding-left: 6px;
}
.bold {
  font-weight: 900;
}
.strong {
  font-size: 23px;
}
.grey {
  background: #f1f1f1;
}
.lilac {
  background: #ead9ef;
}
.ink {
  background: #000;
  color: #fff;
  font-weight: 700;
  box-shadow: -2px -2px #000, 0 -2px #000, -2px 0 #000;
}
.edge-purple {
  border-bottom-color: var(--purple);
}
.edge-grey {
  border-bottom-color: #f1f1f1;
}
.box {
  --edge: var(--purple);
  padding-right: 4px;
  border-right-width: 2px;
  border-color: var(--edge);
  box-shadow: -2px -2px var(--edge), 0 -2px var(--edge), -2px 0 var(--edge);
}
.dark {
  --edge: #3d3d3d;
}
.rule-low {
  box-shadow: inset 0 -2px var(--purple);
}
.rule-top {
  box-shadow: inset 0 2px var(--purple);
}
.selected {
  position: relative;
}
.selected::before {
  content: "";
  position: absolute;
  inset: -4px -2px -4px -2px;
  border: 4px solid var(--green);
}
.selected::after {
  content: "";
  position: absolute;
  right: -6px;
  bottom: -6px;
  width: 10px;
  height: 10px;
  background: var(--green);
  border: 2px solid #fff;
  border-width: 2px 0 0 2px;
}

/* sheet tabs */
.tabs {
  display: flex;
  height: 50px;
  background: #323232;
  border-top: 2px solid #666;
  border-bottom: 1px solid #000;
  color: #8a8a8a;
  font-family: "Liberation Sans", sans-serif;
  font-size: 25px;
}
.arrows {
  display: flex;
  gap: 32px;
  width: 90px;
  padding-left: 30px;
}
.prev,
.next {
  display: block;
  width: 14px;
  height: 20px;
  background: #696969;
}
.prev {
  clip-path: polygon(100% 0, 100% 100%, 0 50%);
}
.next {
  clip-path: polygon(0 0, 100% 50%, 0 100%);
}
.tab {
  box-sizing: border-box;
  flex: none;
  gap: 12px;
  padding-bottom: 4px;
  background: linear-gradient(#666, #666) no-repeat left top / 2px 41px, #222;
}
.tab.front {
  height: 46px;
  margin-top: -2px;
  padding-bottom: 0;
  border-bottom: 2px solid #666;
  border-left: 2px solid #666;
  border-radius: 0 0 5px 5px;
  background: #fff;
  color: #3b8253;
  font-weight: 700;
}
.add {
  box-sizing: border-box;
  width: 78px;
  height: 41px;
  padding-top: 6px;
  border-left: 2px solid #666;
  border-right: 2px solid #666;
}
.add i {
  width: 20px;
  height: 20px;
  background: linear-gradient(#6c6c6c, #6c6c6c) center / 20px 4px no-repeat, linear-gradient(#6c6c6c, #6c6c6c) center / 4px 20px no-repeat;
}

/* status bar */
.status {
  display: flex;
  justify-content: flex-end;
  align-items: center;
  height: 45px;
  padding-right: 48px;
  background: linear-gradient(#494949, #3b3b3b);
}
.view {
  width: 72px;
  height: 45px;
}
.view.on {
  background: #606060;
}
.zoom {
  display: flex;
  align-items: center;
  gap: 14px;
  padding: 0 34px 0 16px;
}
.zoom input {
  appearance: none;
  width: 200px;
  height: 8px;
  border-radius: 4px;
  background: #7b7b7b;
}
.zoom input::-webkit-slider-thumb {
  appearance: none;
  width: 22px;
  height: 22px;
  border-radius: 50%;
  background: #a3a3a3;
}
.percent {
  font-size: 24px;
  font-weight: 400;
}
</style>
